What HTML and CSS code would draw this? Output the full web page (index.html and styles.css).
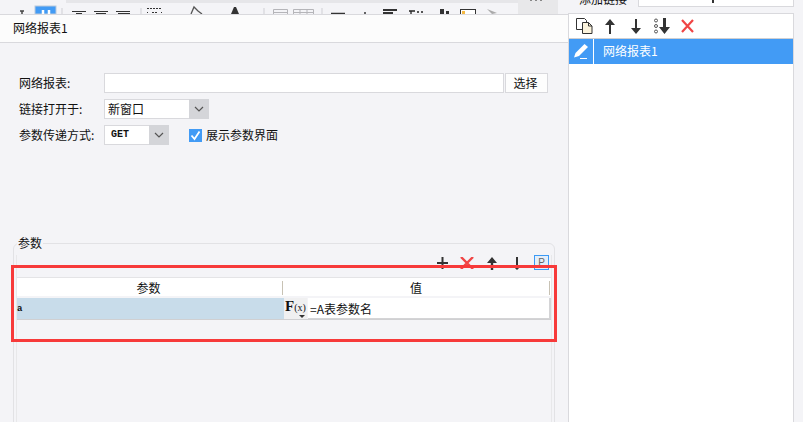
FILE: index.html
```html
<!DOCTYPE html>
<html lang="zh">
<head>
<meta charset="utf-8">
<title>网络报表</title>
<link rel="stylesheet" href="styles.css">
</head>
<body>
<div class="page">
  <main class="left">
    <div class="strip">
      <svg class="strip-svg" width="568" height="14" viewBox="0 0 568 14">
        <rect x="66" y="0" width="486" height="3" fill="#e6e6e9"/>
        <rect x="518" y="0" width="40" height="14" fill="#e8e8ea"/>
        <path d="M20 11h4M22 11v3" stroke="#444" stroke-width="1.5"/>
        <rect x="35" y="6" width="21" height="8" fill="#429bf5" stroke="#b9c9dc"/>
        <path d="M43 10v4M49 10v4" stroke="#fff" stroke-width="2.5"/>
        <path d="M62 8v6M141 8v6M264 8v6M322 8v6" stroke="#cfcfd4"/>
        <path d="M72 11.500h14M76 13.500h6M94 11.500h14M96 13.500h10M116 11.500h14M118 13.500h12" stroke="#333"/>
        <path d="M147 8.500h15M147 12.500h1M161 12.500h1M152 12.500h5" stroke="#333" stroke-dasharray="2 1"/>
        <path d="M191 14l3-7 4 4 4 3" fill="none" stroke="#555" stroke-width="1.300"/>
        <path d="M231 14l3-7h2l3 7z" fill="#333"/>
        <path d="M273.500 14V9.500h14V14M273.500 12.500h14M293.500 14V9.500h20V14M300 9.500V14M307 9.500V14M293.500 12.500h20" fill="none" stroke="#b5b5b9"/>
        <path d="M331 13.500h14" stroke="#333" stroke-width="1.500"/>
        <path d="M365 12v2" stroke="#333" stroke-width="1.500"/>
        <path d="M383 10h14M383 13h10" stroke="#333" stroke-width="2"/>
        <path d="M409 11h6M411 11v3M417 12h2M421 12h2" stroke="#222" stroke-width="1.300"/>
        <rect x="440" y="9" width="4" height="5" fill="#333"/>
        <rect x="446" y="11" width="3" height="3" fill="#333"/>
        <rect x="460.500" y="9.500" width="15" height="5" fill="#fff" stroke="#333"/>
        <rect x="462" y="11" width="3" height="3" fill="#f5b942"/>
        <path d="M487 9l10 4-5 1z" fill="#aaa"/>
        <path d="M530 0h2v1h-2zM535 0h2v1h-2zM540 0h2v1h-2z" fill="#888"/>
      </svg>
    </div>
    <div class="tabbar"><span class="tab-title">网络报表1</span></div>
    <form class="form">
      <div class="row row-first">
        <label class="label">网络报表:</label>
        <input class="text-input" type="text">
        <button class="pick" type="button">选择</button>
      </div>
      <div class="row">
        <label class="label">链接打开于:</label>
        <div class="select select-wide">
          <span class="select-value">新窗口</span>
          <span class="select-arrow"><svg width="10" height="6" viewBox="0 0 10 6"><path d="M1 1l4 4 4-4" fill="none" stroke="#555" stroke-width="1.200"/></svg></span>
        </div>
      </div>
      <div class="row">
        <label class="label">参数传递方式:</label>
        <div class="select select-narrow">
          <span class="select-value mono">GET</span>
          <span class="select-arrow"><svg width="10" height="6" viewBox="0 0 10 6"><path d="M1 1l4 4 4-4" fill="none" stroke="#555" stroke-width="1.200"/></svg></span>
        </div>
        <span class="check">
          <svg width="13" height="13" viewBox="0 0 13 13"><rect width="13" height="13" fill="#429bf5"/><path d="M2.500 6.500l3 3.500 5-7.500" fill="none" stroke="#fff" stroke-width="1.800"/></svg>
        </span>
        <span class="check-text">展示参数界面</span>
      </div>
    </form>
    <fieldset class="params">
      <legend class="legend">参数</legend>
      <div class="inner">
        <div class="tools">
          <svg class="tool t-plus" width="11" height="12" viewBox="0 0 11 12"><path d="M0 6h11M5.500 0v12" stroke="#333" stroke-width="2"/></svg>
          <svg class="tool t-x" width="14" height="12" viewBox="0 0 14 12"><path d="M1 0l12 12M13 0L1 12" stroke="#f04545" stroke-width="2.400"/></svg>
          <svg class="tool t-up" width="10" height="13" viewBox="0 0 10 13"><path d="M5 0l5 6H6.200v7H3.800V6H0z" fill="#333"/></svg>
          <svg class="tool t-down" width="10" height="13" viewBox="0 0 10 13"><path d="M4 0h2v8h4l-5 5-5-5h4z" fill="#333"/></svg>
          <span class="p-btn">P</span>
        </div>
        <div class="thead">
          <span class="th th-a">参数</span>
          <span class="th th-b">值</span>
        </div>
        <div class="trow">
          <span class="cell-name">a</span>
          <span class="cell-fx"><b class="fx-f">F</b><span class="fx-x">(x)</span><i class="fx-caret"></i></span>
          <span class="cell-value">=A表参数名</span>
        </div>
      </div>
      <div class="redbox"></div>
    </fieldset>
  </main>
  <aside class="right">
    <div class="right-top">
      <span class="add-label">添加链接</span>
      <span class="add-input"><i class="add-tick"></i></span>
    </div>
    <div class="panel">
      <div class="panel-tools">
        <svg class="ptool" width="17" height="16" viewBox="0 0 17 16"><path d="M.5.500h8l2 2v9H.5z" fill="#fff" stroke="#333"/><path d="M6.500 4.500h6l3.500 3.500v7.500H6.500z" fill="#fbf3dc" stroke="#333"/><path d="M12.500 4.500V8H16" fill="none" stroke="#333"/></svg>
        <svg class="ptool p-up" width="10" height="15" viewBox="0 0 10 15"><path d="M5 0l5 6H6v9H4V6H0z" fill="#333"/></svg>
        <svg class="ptool p-down" width="10" height="15" viewBox="0 0 10 15"><path d="M4 0h2v9h4l-5 6-5-6h4z" fill="#333"/></svg>
        <svg class="ptool p-dots" width="16" height="16" viewBox="0 0 16 16"><circle cx="2" cy="2.500" r="1.500" fill="none" stroke="#555"/><circle cx="2" cy="8" r="1.500" fill="none" stroke="#555"/><circle cx="2" cy="13.500" r="1.500" fill="none" stroke="#555"/><path d="M9 0h3v9h4l-5.500 7L5 9h4z" fill="#333"/></svg>
        <svg class="ptool p-x" width="13" height="14" viewBox="0 0 13 14"><path d="M1 1l11 12M12 1L1 13" stroke="#f04545" stroke-width="2.200"/></svg>
      </div>
      <div class="item">
        <span class="item-icon"><svg width="14" height="15" viewBox="0 0 14 15"><path d="M10.500 0L14 3l-9 9-5 1.500L1.500 9z" fill="#fff"/><path d="M6 14.500h7" stroke="#fff"/></svg></span>
        <span class="item-text">网络报表1</span>
      </div>
    </div>
  </aside>
</div>
</body>
</html>
```

FILE: styles.css
```css
* { box-sizing: border-box; }
html, body { margin: 0; padding: 0; }
body {
  width: 803px;
  height: 422px;
  overflow: hidden;
  background: #f4f4f7;
  color: #111;
  font: 12px/16px "Noto Sans CJK SC", "Liberation Sans", sans-serif;
}
.page {
  display: grid;
  grid-template-columns: 568px 226px;
  height: 422px;
  overflow: hidden;
}
.left { display: flex; flex-direction: column; min-width: 0; height: 422px; overflow: hidden; }
.strip { height: 14px; flex: none; overflow: hidden; }
.strip-svg { display: block; }
.tabbar {
  flex: none;
  height: 29px;
  background: #fcfcfc;
  border-top: 1px solid #d9d9dd;
  border-bottom: 1px solid #d9d9dd;
  padding: 5px 0 0 13px;
}
.tab-title { display: block; }
.form { flex: none; padding: 30px 0 0 19px; }
.row { display: flex; align-items: center; height: 20px; margin-top: 6px; }
.row-first { margin-top: 0; }
.label { width: 85px; flex: none; }
.text-input {
  width: 400px;
  height: 20px;
  margin: 0;
  padding: 0;
  background: #fff;
  border: 1px solid #d9d9dd;
  border-radius: 0;
}
.pick {
  width: 43px;
  height: 20px;
  margin: 0 0 0 1px;
  padding: 0 2px 0 0;
  background: #fdfdfd;
  border: 1px solid #d9d9dd;
  border-radius: 0;
  color: #111;
  font: inherit;
}
.select {
  display: flex;
  height: 20px;
  background: #fff;
  border: 1px solid #d9d9dd;
  border-right: 0;
}
.select-wide { width: 105px; }
.select-narrow { width: 65px; }
.select-value { flex: 1; padding: 0 0 0 3px; line-height: 17px; }
.mono { padding-left: 6px; font: bold 10px/17px "Liberation Mono", monospace; }
.select-arrow {
  display: flex;
  flex: none;
  align-items: center;
  justify-content: center;
  width: 20px;
  margin: -1px 0;
  background: #d4d5d9;
}
.check { display: flex; margin-left: 20px; }
.check-text { margin-left: 4px; }
.params {
  flex: none;
  position: relative;
  width: 542px;
  height: 200px;
  margin: 90px 0 0 13px;
  padding: 0;
  border: 1px solid #e2e2e5;
  border-radius: 6px;
  min-width: 0;
}
.legend {
  margin-left: 3px;
  padding: 0 1px;
  line-height: 16px;
  font-size: 12px;
}
.inner { width: 536px; height: 180px; margin: 4px 0 0 2px; border-left: 1px solid #e8e8ea; border-right: 1px solid #e8e8ea; }
.tools { display: flex; align-items: flex-start; height: 22px; padding-top: 0; }
.tool { display: block; flex: none; margin-top: 2px; }
.t-plus { margin-left: 420px; }
.t-x { margin-left: 12px; }
.t-up { margin-left: 13px; }
.t-down { margin-left: 15px; }
.p-btn {
  width: 15px;
  height: 15px;
  margin-left: 12px;
  border: 1px solid #3b9af5;
  background: #e3eefa;
  color: #666;
  font: 10px/13px "Liberation Sans", sans-serif;
  text-align: center;
}
.thead {
  display: flex;
  height: 19px;
  background: #fff;
  border-top: 1px solid #e4e4e6;
  line-height: 19px;
}
.th { text-align: center; }
.th-a { width: 266px; padding-right: 2px; border-right: 1px solid #c8c2b4; height: 14px; margin-top: 3px; line-height: 14px; }
.th-b { width: 267px; border-right: 1px solid #c8c2b4; height: 14px; margin-top: 3px; line-height: 14px; }
.trow {
  display: flex;
  height: 22px;
  margin-top: 2px;
  border-bottom: 1px solid #d0d0d2;
}
.cell-name {
  width: 267px;
  padding-left: 0;
  background: #c8dcea;
  font: bold 9px/23px "Liberation Mono", monospace;
}
.cell-fx {
  position: relative;
  flex: none;
  width: 23px;
  background: #f0f0f1;
  padding-left: 1px;
  line-height: 15px;
}
.fx-f { font: bold 15px/15px "Liberation Serif", serif; }
.fx-x { font: 10px/15px "Liberation Serif", serif; }
.fx-caret {
  position: absolute;
  left: 15px;
  bottom: 1px;
  border: 3px solid transparent;
  border-top-color: #333;
  border-bottom: 0;
}
.cell-value {
  flex: 1;
  padding-left: 2px;
  margin-left: 1px;
  background: #fff;
  border-right: 2px solid #d4d4d6;
  border-bottom: 1px solid #d4d4d6;
  line-height: 21px;
}
.redbox {
  position: absolute;
  left: -3px;
  top: 14px;
  width: 546px;
  height: 77px;
  border: 3px solid #f73a3a;
}
.right { display: flex; flex-direction: column; min-width: 0; height: 422px; }
.right-top { display: flex; flex: none; height: 13px; overflow: hidden; }
.add-label { width: 70px; padding-left: 11px; margin-top: -9px; flex: none; line-height: 16px; height: 16px; }
.add-input {
  position: relative;
  width: 156px;
  height: 7px;
  background: #fff;
  border: 1px solid #d9d9dd;
  border-top: 0;
}
.add-tick { position: absolute; left: 73px; top: 0; width: 2px; height: 3px; background: #333; }
.panel {
  flex: 1;
  background: #fff;
  border: 1px solid #d9d9dd;
  border-bottom: 0;
}
.panel-tools {
  display: flex;
  align-items: center;
  height: 25px;
  padding-left: 7px;
  border-bottom: 1px solid #cfcfd2;
}
.ptool { flex: none; display: block; }
.p-up { margin-left: 12px; }
.p-down { margin-left: 16px; }
.p-dots { margin-left: 13px; }
.p-x { margin-left: 11px; }
.item { display: flex; height: 25px; background: #429bf5; color: #fff; }
.item-icon {
  display: flex;
  align-items: center;
  justify-content: center;
  width: 25px;
  border-right: 1px solid #fff;
}
.item-text { padding-left: 9px; line-height: 24px; }
```
